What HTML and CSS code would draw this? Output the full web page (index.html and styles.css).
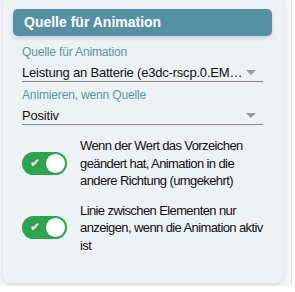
FILE: index.html
```html
<!DOCTYPE html>
<html lang="de">
<head>
    <meta charset="UTF-8">
    <meta name="viewport" content="width=device-width, initial-scale=1.0">
    <title>Quelle für Animation</title>
    <link rel="stylesheet" href="styles.css">
</head>
<body>
    <div class="page">
        <div class="card">
            <div class="card-title">Quelle für Animation</div>

            <div class="fields">
                <div class="field">
                    <label class="field-label">Quelle für Animation</label>
                    <div class="select">
                        <span class="select-value">Leistung an Batterie (e3dc-rscp.0.EM…</span>
                        <span class="arrow"></span>
                    </div>
                </div>

                <div class="field">
                    <label class="field-label">Animieren, wenn Quelle</label>
                    <div class="select">
                        <span class="select-value">Positiv</span>
                        <span class="arrow"></span>
                    </div>
                </div>

                <div class="switch-row">
                    <div class="switch on"><span class="check">✔</span><span class="knob"></span></div>
                    <div class="switch-text">Wenn der Wert das Vorzeichen geändert hat, Animation in die andere Richtung (umgekehrt)</div>
                </div>

                <div class="switch-row">
                    <div class="switch on"><span class="check">✔</span><span class="knob"></span></div>
                    <div class="switch-text">Linie zwischen Elementen nur anzeigen, wenn die Animation aktiv ist</div>
                </div>
            </div>
        </div>
    </div>
</body>
</html>
```

FILE: styles.css
```css
body {
    font-family: "Liberation Sans", Arial, sans-serif;
    margin: 0;
    padding: 0;
    background: #fff;
    overflow: hidden;
}
.page {
    width: 292px;
    height: 292px;
    background: #f5f6f6;
    border-right: 1px solid #e2e2e2;
    padding-left: 3px;
    box-sizing: border-box;
}
.card {
    width: 280px;
    height: 289px;
    margin-top: -6px;
    padding-top: 15px;
    box-sizing: border-box;
    background: #edf2f5;
    border-radius: 8px;
    box-shadow: 0 2px 6px rgba(0, 0, 0, 0.12);
}
.card-title {
    margin: 0 11px 0 10px;
    height: 27px;
    line-height: 27px;
    padding-left: 11px;
    background: #5690a3;
    color: #fff;
    font-weight: bold;
    font-size: 14px;
    border-radius: 5px;
    box-shadow: 0 2px 4px rgba(0, 0, 0, 0.15);
}
.fields {
    padding: 9px 20px 0 19px;
}
.field {
    margin-bottom: 6px;
}
.field-label {
    display: block;
    font-size: 12px;
    letter-spacing: -0.15px;
    line-height: 14px;
    color: #5a94a8;
}
.select {
    display: flex;
    align-items: center;
    height: 23px;
    padding-top: 5px;
    box-sizing: border-box;
    border-bottom: 1px solid #8a8a8a;
    font-size: 13px;
    letter-spacing: -0.2px;
    color: #111;
}
.select-value {
    flex: 1;
    white-space: nowrap;
}
.arrow {
    width: 0;
    height: 0;
    margin-right: 7px;
    border-left: 5px solid transparent;
    border-right: 5px solid transparent;
    border-top: 5px solid #999;
}
.switch-row {
    display: flex;
    align-items: center;
    gap: 13px;
    margin-top: 12px;
    margin-right: -6px;
}
.switch {
    position: relative;
    flex: none;
    width: 45px;
    height: 23px;
    border-radius: 12px;
    background: #2ea44f;
}
.check {
    position: absolute;
    left: 8px;
    top: 4px;
    color: #fff;
    font-size: 12px;
    line-height: 15px;
    font-family: "DejaVu Sans", sans-serif;
}
.knob {
    position: absolute;
    right: 2px;
    top: 2px;
    width: 19px;
    height: 19px;
    border-radius: 50%;
    background: #fff;
}
.switch-text {
    font-size: 13px;
    letter-spacing: -0.6px;
    line-height: 17.5px;
    color: #111;
}
```
